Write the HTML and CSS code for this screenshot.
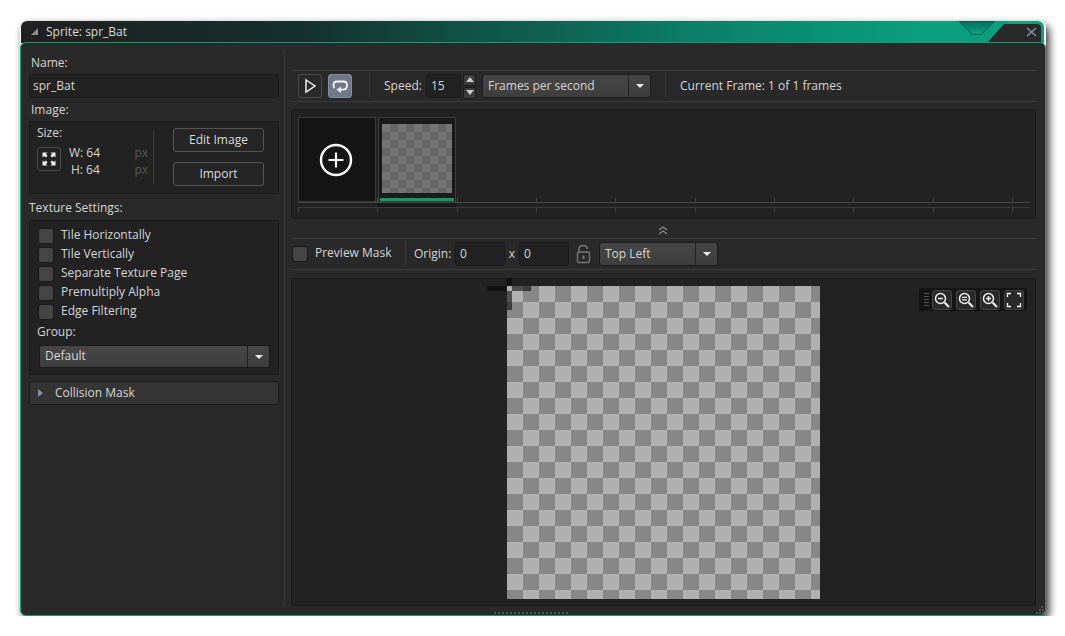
FILE: index.html
```html
<!DOCTYPE html>
<html lang="en">
<head>
    <meta charset="UTF-8">
    <title>Sprite: spr_Bat</title>
    <link rel="stylesheet" href="styles.css">
</head>
<body>
    <div class="window">
        <header class="titlebar">
            <svg class="title-arrow" width="8" height="8" viewBox="0 0 8 8"><polygon points="7,0 7,7 0,7" fill="#8c8c8c"/></svg>
            <span>Sprite: spr_Bat</span>
            <svg class="title-tab" width="85" height="22" viewBox="0 0 85 22">
                <defs>
                    <linearGradient id="notch" x1="0" y1="0" x2="0" y2="1">
                        <stop offset="0" stop-color="#056b5a"/>
                        <stop offset="1" stop-color="#0aa582"/>
                    </linearGradient>
                </defs>
                <polygon points="0,0 36,0 22,13.5 13,13.5" fill="url(#notch)" stroke="#04493f" stroke-width="0.8"/>
                <path d="M29 21 L45 3 L78 3 Q82 3 82 7 L82 21 Z" fill="#292929"/>
                <path d="M68 7 L77 15 M77 7 L68 15" stroke="#8b949e" stroke-width="1.4" fill="none"/>
            </svg>
        </header>

        <div class="content">
            <aside class="sidebar">
                <label class="label label-name">Name:</label>
                <div class="field field-name">spr_Bat</div>
                <label class="label label-name">Image:</label>
                <div class="box image-box">
                    <div class="size-col">
                        <div class="size-label">Size:</div>
                        <div class="size-row">
                            <div class="icon-btn">
                                <svg width="16" height="16" viewBox="0 0 16 16" fill="#f0f0f0">
                                    <polygon points="1.5,1.5 6.5,1.5 4.9,3.1 6.6,4.8 4.8,6.6 3.1,4.9 1.5,6.5"/>
                                    <polygon points="14.5,1.5 9.5,1.5 11.1,3.1 9.4,4.8 11.2,6.6 12.9,4.9 14.5,6.5"/>
                                    <polygon points="1.5,14.5 6.5,14.5 4.9,12.9 6.6,11.2 4.8,9.4 3.1,11.1 1.5,9.5"/>
                                    <polygon points="14.5,14.5 9.5,14.5 11.1,12.9 9.4,11.2 11.2,9.4 12.9,11.1 14.5,9.5"/>
                                </svg>
                            </div>
                            <div class="dims">
                                <div class="dim"><span>W: 64</span><span class="unit">px</span></div>
                                <div class="dim dim-h"><span>H: 64</span><span class="unit">px</span></div>
                            </div>
                        </div>
                    </div>
                    <div class="vsep"></div>
                    <div class="image-actions">
                        <button class="btn">Edit Image</button>
                        <button class="btn">Import</button>
                    </div>
                </div>

                <label class="label label-texture">Texture Settings:</label>
                <div class="box texture-box">
                    <div class="check-row"><span class="check"></span>Tile Horizontally</div>
                    <div class="check-row"><span class="check"></span>Tile Vertically</div>
                    <div class="check-row"><span class="check"></span>Separate Texture Page</div>
                    <div class="check-row"><span class="check"></span>Premultiply Alpha</div>
                    <div class="check-row"><span class="check"></span>Edge Filtering</div>
                    <div class="group-label">Group:</div>
                    <div class="dropdown dropdown-group">
                        <span class="dropdown-value">Default</span>
                        <span class="dropdown-btn"><i class="caret"></i></span>
                    </div>
                </div>

                <div class="collapse-bar"><i class="collapse-arrow"></i>Collision Mask</div>
            </aside>

            <div class="divider"></div>

            <main class="editor">
                <div class="toolbar toolbar-top">
                    <div class="tool-btn">
                        <svg width="16" height="16" viewBox="0 0 16 16"><polygon points="4,2 13,8 4,14" fill="none" stroke="#f0f0f0" stroke-width="1.5"/></svg>
                    </div>
                    <div class="tool-btn tool-btn-on">
                        <svg width="20" height="18" viewBox="0 0 20 18" fill="none" stroke="#f4f4f4" stroke-width="1.8">
                            <path d="M4.5 11 Q3.5 10 3.5 8 Q3.5 4.5 7 4.5 H13.5 Q17 4.5 17 8 Q17 12.7 13 12.7 H10"/>
                            <polygon points="11,9.5 11,16 6.5,12.7" fill="#f4f4f4" stroke="none"/>
                        </svg>
                    </div>
                    <div class="sep sep-play"></div>
                    <span class="tool-label speed-label">Speed:</span>
                    <div class="field field-speed">15</div>
                    <div class="spin">
                        <div class="spin-btn"><i class="spin-up"></i></div>
                        <div class="spin-btn"><i class="spin-down"></i></div>
                    </div>
                    <div class="dropdown dropdown-speed">
                        <span class="dropdown-value">Frames per second</span>
                        <span class="dropdown-btn"><i class="caret"></i></span>
                    </div>
                    <div class="sep sep-frame"></div>
                    <span class="tool-label">Current Frame: 1 of 1 frames</span>
                </div>

                <section class="box frames">
                    <div class="frame-row">
                        <div class="frame frame-add">
                            <svg class="add-icon" width="34" height="34" viewBox="0 0 34 34" fill="none" stroke="#fff">
                                <circle cx="17" cy="17" r="15" stroke-width="2.4"/>
                                <path d="M17 9.5 V24.5 M9.5 17 H24.5" stroke-width="2.2"/>
                            </svg>
                        </div>
                        <div class="frame frame-sprite">
                            <div class="thumb"></div>
                            <div class="frame-bar"></div>
                        </div>
                    </div>
                    <div class="ruler">
                        <div class="ruler-top"><div class="ruler-patch"></div></div>
                        <div class="ruler-ticks"></div>
                    </div>
                </section>

                <div class="splitter">
                    <svg width="10" height="9" viewBox="0 0 10 9" fill="none" stroke="#8a8a8a" stroke-width="1.3"><path d="M1 4 L5 1 L9 4 M1 8 L5 5 L9 8"/></svg>
                </div>

                <div class="toolbar toolbar-origin">
                    <span class="check"></span>
                    <span class="tool-label preview-label">Preview Mask</span>
                    <div class="sep sep-preview"></div>
                    <span class="tool-label origin-label">Origin:</span>
                    <div class="field field-origin">0</div>
                    <span class="tool-label origin-x">x</span>
                    <div class="field field-origin">0</div>
                    <svg class="lock" width="15" height="20" viewBox="0 0 15 20" fill="none" stroke="#777" stroke-width="1.4">
                        <path d="M3 8 V5 Q3 1.5 7 1.5 Q11 1.5 11.5 5"/>
                        <rect x="1.5" y="8" width="12" height="10.5" rx="1.5"/>
                        <path d="M7.5 11.5 V15" stroke-width="2"/>
                    </svg>
                    <div class="dropdown dropdown-origin">
                        <span class="dropdown-value">Top Left</span>
                        <span class="dropdown-btn"><i class="caret"></i></span>
                    </div>
                </div>

                <section class="box preview">
                    <div class="canvas">
                        <div class="cross cross-left"></div>
                        <div class="cross cross-top"></div>
                        <div class="cross cross-right"></div>
                        <div class="cross cross-down"></div>
                    </div>
                    <div class="zoom-tools">
                        <div class="zoom-grip"></div>
                        <div class="zoom-btn">
                            <svg width="18" height="18" viewBox="0 0 18 18" fill="none" stroke="#eee" stroke-width="1.5"><circle cx="7.5" cy="7.5" r="5"/><path d="M11.5 11.5 L16 16" stroke-width="2.2"/><path d="M5 7.5 H10"/></svg>
                        </div>
                        <div class="zoom-btn">
                            <svg width="18" height="18" viewBox="0 0 18 18" fill="none" stroke="#eee" stroke-width="1.5"><circle cx="7.5" cy="7.5" r="5"/><path d="M11.5 11.5 L16 16" stroke-width="2.2"/><path d="M5 6.3 H10 M5 8.8 H10" stroke-width="1.2"/></svg>
                        </div>
                        <div class="zoom-btn">
                            <svg width="18" height="18" viewBox="0 0 18 18" fill="none" stroke="#eee" stroke-width="1.5"><circle cx="7.5" cy="7.5" r="5"/><path d="M11.5 11.5 L16 16" stroke-width="2.2"/><path d="M5 7.5 H10 M7.5 5 V10"/></svg>
                        </div>
                        <div class="zoom-btn">
                            <svg width="16" height="16" viewBox="0 0 16 16" fill="none" stroke="#fff" stroke-width="1.3"><path d="M1.5 5 V1.5 H5 M11 1.5 H14.5 V5 M14.5 11 V14.5 H11 M5 14.5 H1.5 V11"/></svg>
                        </div>
                    </div>
                </section>
            </main>

            <div class="resize-grip"></div>
            <svg class="corner-grip" width="8" height="8" viewBox="0 0 8 8" fill="#555"><rect x="5" y="0" width="2" height="2"/><rect x="3" y="3" width="2" height="2"/><rect x="6" y="3" width="2" height="2"/><rect x="0" y="6" width="2" height="2"/><rect x="3" y="6" width="2" height="2"/><rect x="6" y="6" width="2" height="2"/></svg>
        </div>
    </div>
</body>
</html>
```

FILE: styles.css
```css
* {
    margin: 0;
    padding: 0;
    box-sizing: border-box;
}

body {
    background: #fff;
    font-family: "Open Sans", sans-serif;
    font-size: 12px;
    color: #d6d6d6;
    overflow: hidden;
}

.window {
    width: 1026px;
    margin: 21px 0 0 20px;
    border-radius: 7px;
    box-shadow: 3px 4px 8px rgba(0, 0, 0, 0.8);
}

/* Title bar */
.titlebar {
    position: relative;
    display: flex;
    align-items: center;
    height: 22px;
    margin: 0 2px 0 1px;
    padding: 0 0 1px 10px;
    border-radius: 6px 6px 0 0;
    background: linear-gradient(90deg, #202020 0, #14302c 280px, #0b8068 680px, #0a9e7c 900px);
    color: #dcdcdc;
}

.title-arrow {
    margin-right: 7px;
}

.title-tab {
    position: absolute;
    top: 0;
    right: 0;
}

.content {
    position: relative;
    display: flex;
    height: 574px;
    margin-top: -1px;
    background: #292929;
    border: 1px solid #0ba06f;
    border-radius: 6px;
}

/* Left column */
.sidebar {
    width: 263px;
    padding: 11px 5px 0 8px;
}

.label {
    display: block;
    line-height: 18px;
}

.label-name {
    margin-left: 2px;
}

.field-name {
    margin: 2px 0 3px;
}

.label-texture {
    margin-top: 5px;
}

.box {
    background: #222;
    border: 1px solid #1a1a1a;
    border-radius: 2px;
}

.field {
    display: flex;
    align-items: center;
    height: 24px;
    padding: 0 0 2px 3px;
    background: #222;
    border: 1px solid #1a1a1a;
    border-radius: 3px;
}

.image-box {
    display: flex;
    height: 73px;
    margin-top: 2px;
}

.size-col {
    padding: 2px 0 0 7px;
}

.size-label {
    line-height: 18px;
}

.size-row {
    display: flex;
    margin-top: 2px;
}

.icon-btn {
    display: flex;
    align-items: center;
    justify-content: center;
    width: 24px;
    height: 24px;
    margin-top: 3px;
    border: 1px solid #4a4a4a;
    border-radius: 3px;
}

.dims {
    width: 79px;
    margin-left: 8px;
}

.dim {
    display: flex;
    justify-content: space-between;
    line-height: 17px;
}

.dim-h {
    padding-left: 2px;
}

.unit {
    color: #575757;
}

.vsep {
    width: 1px;
    margin: 8px 0 8px 5px;
    background: #3a3a3a;
}

.image-actions {
    display: flex;
    flex-direction: column;
    gap: 10px;
    margin-left: 19px;
    padding-top: 6px;
}

.btn {
    width: 91px;
    height: 24px;
    padding-bottom: 2px;
    background: #252525;
    border: 1px solid #555;
    border-radius: 3px;
    font: inherit;
    color: #dcdcdc;
}

.texture-box {
    height: 155px;
    margin-top: 3px;
    padding: 7px 8px 0 8px;
}

.check-row {
    display: flex;
    height: 16px;
    margin-bottom: 3px;
    line-height: 14px;
}

.check {
    display: block;
    flex: none;
    width: 16px;
    height: 16px;
    margin-right: 7px;
    background: #444;
    border: 1px solid #1a1a1a;
    border-radius: 3px;
}

.group-label {
    margin: 3px 0 4px -1px;
    line-height: 18px;
}

.dropdown {
    display: flex;
    background: linear-gradient(#464646, #3e3e3e);
    border: 1px solid #1c1c1c;
    border-radius: 3px;
}

.dropdown-value {
    flex: 1;
    display: flex;
    align-items: center;
    padding: 0 0 2px 5px;
}

.dropdown-btn {
    display: flex;
    align-items: center;
    justify-content: center;
    width: 22px;
    border-left: 1px solid #222;
}

.caret {
    width: 0;
    height: 0;
    border-left: 4px solid transparent;
    border-right: 4px solid transparent;
    border-top: 4px solid #eee;
}

.dropdown-group {
    width: 231px;
    height: 23px;
    margin-left: 1px;
}

.collapse-bar {
    display: flex;
    align-items: center;
    height: 24px;
    margin-top: 6px;
    padding: 0 0 1px 8px;
    background: #343434;
    border: 1px solid #1a1a1a;
    border-radius: 2px;
}

.collapse-arrow {
    width: 0;
    height: 0;
    margin-right: 12px;
    border-top: 4px solid transparent;
    border-bottom: 4px solid transparent;
    border-left: 5px solid #87909a;
}

.divider {
    width: 1px;
    height: 556px;
    margin-top: 7px;
    background: #3a3a3a;
}

/* Right column */
.editor {
    flex: 1;
    padding: 27px 9px 0 6px;
}

.toolbar {
    display: flex;
    align-items: center;
    height: 32px;
    border-top: 1px solid #3a3a3a;
    border-bottom: 1px solid #3a3a3a;
}

.toolbar-top {
    padding-left: 7px;
}

.tool-label {
    padding-bottom: 2px;
}

.tool-btn {
    display: flex;
    align-items: center;
    justify-content: center;
    width: 24px;
    height: 24px;
    margin-right: 6px;
    border: 1px solid #4a4a4a;
    border-radius: 3px;
}

.tool-btn-on {
    background: #6f7888;
    border-color: #868d9a;
}

.sep {
    width: 1px;
    height: 24px;
    background: #3a3a3a;
}

.sep-play {
    margin: 0 14px 0 11px;
}

.speed-label {
    width: 42px;
}

.field-speed {
    width: 35px;
    padding-left: 4px;
}

.spin {
    display: flex;
    flex-direction: column;
    gap: 1px;
    margin: 0 6px 0 2px;
}

.spin-btn {
    display: flex;
    align-items: center;
    justify-content: center;
    width: 13px;
    height: 12px;
    background: #3c3c3c;
    border: 1px solid #1a1a1a;
    border-radius: 2px;
}

.spin-up,
.spin-down {
    width: 0;
    height: 0;
    border-left: 4px solid transparent;
    border-right: 4px solid transparent;
}

.spin-up {
    border-bottom: 5px solid #ccc;
}

.spin-down {
    border-top: 5px solid #ccc;
}

.dropdown-speed {
    width: 169px;
    height: 24px;
}

.sep-frame {
    margin: 0 14px;
}

.frames {
    height: 110px;
    margin-top: 7px;
    padding: 7px 0 0 6px;
}

.frame-row {
    display: flex;
    gap: 2px;
    width: 732px;
    background: repeating-linear-gradient(90deg, #444 0 1px, transparent 1px 79.33px) bottom / 100% 4px no-repeat;
}

.frame {
    width: 78px;
    height: 85px;
    background: #151515;
    border: 1px solid #3c3c3c;
}

.frame-add {
    display: flex;
    align-items: center;
    justify-content: center;
}

.add-icon {
    margin-right: 2px;
}

.frame-sprite {
    padding: 6px 3px 0;
    background: #1a1a1a;
}

.thumb {
    width: 70px;
    height: 69px;
    background: repeating-conic-gradient(#666 0 25%, #767676 0 50%) 0 0 / 16px 16px;
}

.frame-bar {
    width: 74px;
    height: 3px;
    margin: 5px 0 0 -2px;
    background: #0a9e5e;
}

.ruler {
    width: 732px;
    height: 10px;
}

.ruler-top {
    height: 6px;
    border-top: 1px solid #444;
    border-bottom: 1px solid #3a3a3a;
}

.ruler-patch {
    width: 79px;
    height: 4px;
    margin-left: 79px;
    background: #1a1a1a;
}

.ruler-ticks {
    height: 4px;
    background: repeating-linear-gradient(90deg, #444 0 1px, transparent 1px 79.33px);
}

.splitter {
    display: flex;
    align-items: flex-end;
    justify-content: center;
    height: 19px;
    padding: 0 2px 3px 0;
}

.toolbar-origin {
    padding-left: 1px;
}

.preview-label {
    width: 90px;
    padding-bottom: 3px;
}

.sep-preview {
    margin-right: 8px;
}

.origin-label {
    width: 41px;
}

.field-origin {
    width: 50px;
    padding-left: 4px;
}

.origin-x {
    width: 14px;
    text-align: center;
}

.lock {
    margin: 0 8px 0 7px;
}

.dropdown-origin {
    width: 119px;
    height: 24px;
}

.preview {
    position: relative;
    display: flex;
    align-items: center;
    justify-content: center;
    height: 328px;
    margin-top: 8px;
}

.canvas {
    position: relative;
    width: 313px;
    height: 313px;
    background: repeating-conic-gradient(#878787 0 25%, #b0b0b0 0 50%) 0 0 / 32px 32px;
}

.cross {
    position: absolute;
}

.cross-left {
    left: -20px;
    top: 0;
    width: 20px;
    height: 5px;
    background: #111;
}

.cross-top {
    left: 0;
    top: -8px;
    width: 5px;
    height: 8px;
    background: #111;
}

.cross-right {
    left: 5px;
    top: 0;
    width: 19px;
    height: 5px;
    background: rgba(0, 0, 0, 0.55);
}

.cross-down {
    left: 0;
    top: 5px;
    width: 5px;
    height: 19px;
    background: rgba(0, 0, 0, 0.55);
}

.zoom-tools {
    position: absolute;
    top: 9px;
    right: 8px;
    display: flex;
    align-items: center;
    gap: 4px;
    height: 23px;
    padding: 0 3px 0 5px;
    background: #141414;
    border-radius: 3px;
}

.zoom-grip {
    width: 5px;
    height: 14px;
    margin-right: -1px;
    background: repeating-linear-gradient(#555 0 1px, transparent 1px 3px);
}

.zoom-btn {
    display: flex;
    align-items: center;
    justify-content: center;
    width: 20px;
    height: 20px;
    background: #2a2a2a;
    border: 1px solid #444;
    border-radius: 3px;
}

/* Resize handles along the window edge */
.resize-grip {
    position: absolute;
    left: 473px;
    bottom: 1px;
    width: 76px;
    height: 2px;
    background: repeating-linear-gradient(90deg, #555 0 2px, transparent 2px 4px);
}

.corner-grip {
    position: absolute;
    right: 1px;
    bottom: 1px;
}
```
